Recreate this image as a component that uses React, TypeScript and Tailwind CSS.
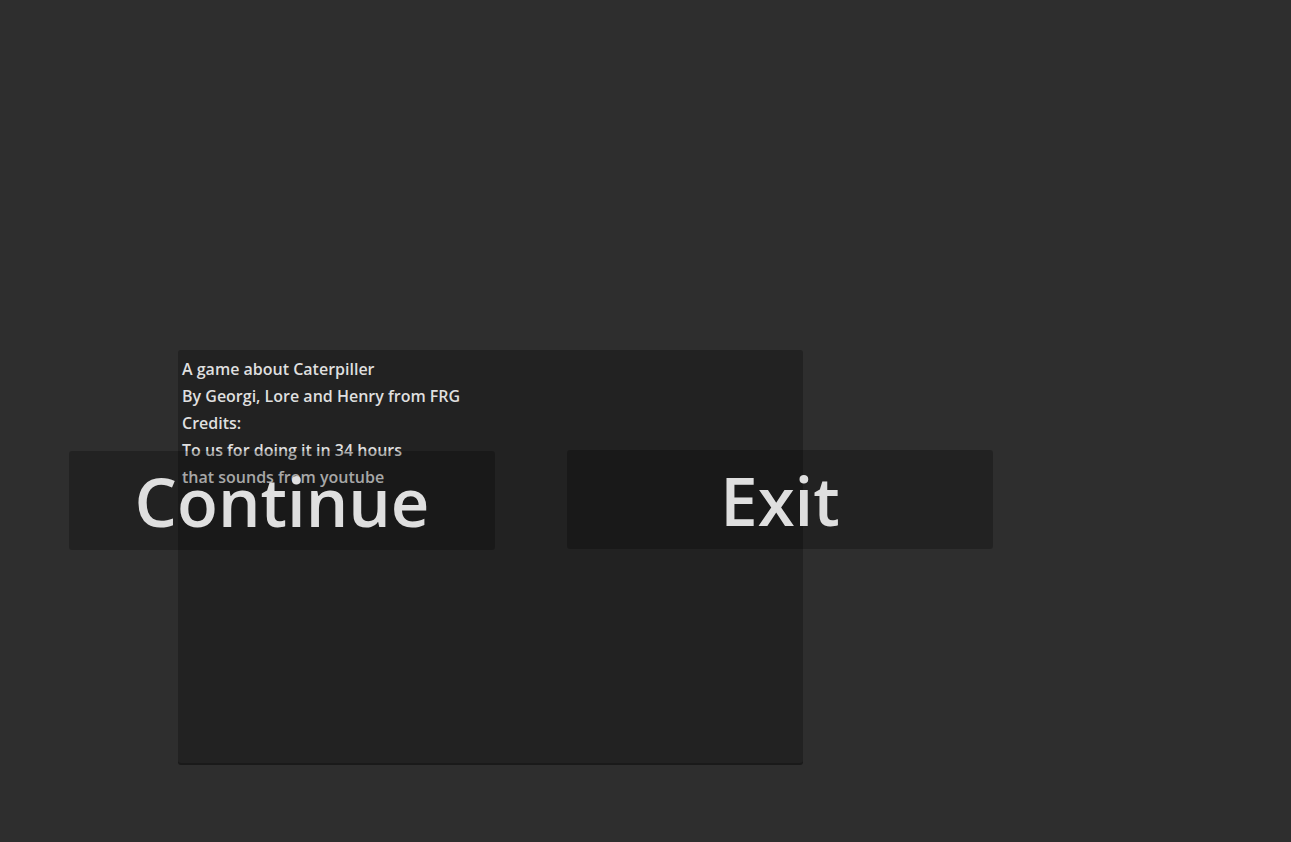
const CREDITS = [
  "A game about Caterpiller",
  "By Georgi, Lore and Henry from FRG",
  "Credits:",
  "To us for doing it in 34 hours",
  "that sounds from youtube",
];

function MenuButton({ label, className = "" }: { label: string; className?: string }) {
  return (
    <button
      className={`flex h-[99px] w-[426px] items-center justify-center rounded-[3px] bg-black/25 pt-[2px] text-[67px] font-semibold leading-none text-[#dfdfdf] ${className}`}
    >
      {label}
    </button>
  );
}

export default function App() {
  return (
    <div
      className="relative h-[842px] w-full overflow-hidden bg-[#2e2e2e]"
      style={{ fontFamily: '"Open Sans", "Noto Sans", sans-serif' }}
    >
      {/* credits popup, sits under the menu buttons */}
      <div className="absolute left-[178px] top-[350px] h-[413px] w-[625px] rounded-[3px] bg-[#222222] px-[4px] pt-[6px] shadow-[0_2px_0_#1a1a1a]">
        {CREDITS.map((line) => (
          <p key={line} className="text-[16px] font-semibold leading-[27px] text-[#dfdfdf]">
            {line}
          </p>
        ))}
      </div>

      <div className="relative flex items-start gap-[72px] pl-[69px] pt-[450px]">
        <MenuButton label="Continue" className="mt-[1px]" />
        <MenuButton label="Exit" />
      </div>
    </div>
  );
}
